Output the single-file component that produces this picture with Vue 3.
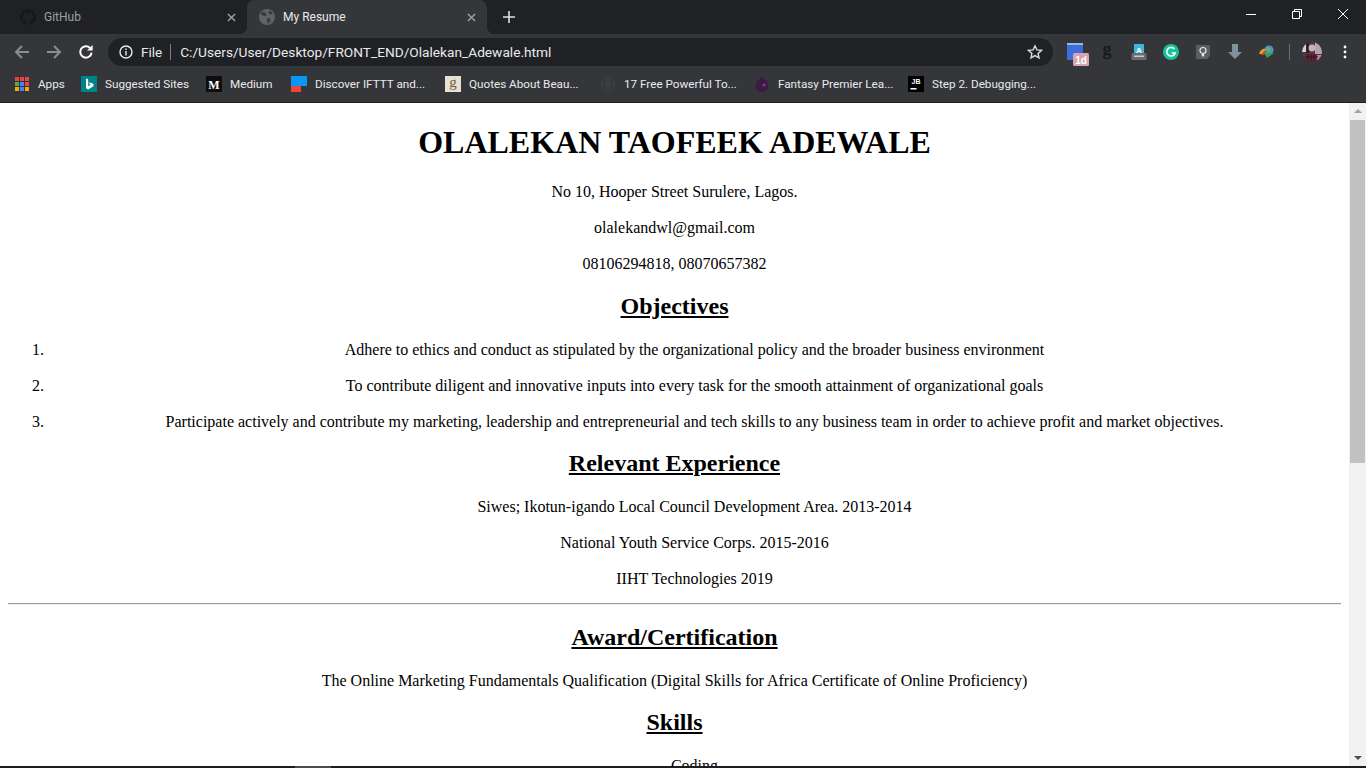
<script setup>
const bookmarks = [
  { id: 'bing', label: 'Suggested Sites', width: 109 },
  { id: 'medium', label: 'Medium', width: 69 },
  { id: 'ifttt', label: 'Discover IFTTT and...', width: 138 },
  { id: 'goodreads', label: 'Quotes About Beau...', width: 139 },
  { id: 'dark', label: '17 Free Powerful To...', width: 138 },
  { id: 'fpl', label: 'Fantasy Premier Lea...', width: 138 },
  { id: 'jb', label: 'Step 2. Debugging...', width: 138 },
]

const appColors = ['#e8453c', '#e8453c', '#e8453c', '#4caf50', '#4285f4', '#e8453c', '#f9ab00', '#4285f4', '#f9ab00']

const objectives = [
  'Adhere to ethics and conduct as stipulated by the organizational policy and the broader business environment',
  'To contribute diligent and innovative inputs into every task for the smooth attainment of organizational goals',
  'Participate actively and contribute my marketing, leadership and entrepreneurial and tech skills to any business team in order to achieve profit and market objectives.',
]

const experience = [
  'Siwes; Ikotun-igando Local Council Development Area. 2013-2014',
  'National Youth Service Corps. 2015-2016',
  'IIHT Technologies 2019',
]
</script>

<template>
  <div class="window">
    <header class="chrome">
      <div class="tabstrip">
        <div class="tab">
          <svg class="favicon" viewBox="0 0 16 16">
            <path fill="#17181a" d="M8 0C3.58 0 0 3.58 0 8c0 3.54 2.29 6.53 5.47 7.59.4.07.55-.17.55-.38v-1.49c-2.01.37-2.53-.49-2.69-.94-.09-.23-.48-.94-.82-1.13-.28-.15-.68-.52-.01-.53.63-.01 1.08.58 1.23.82.72 1.21 1.87.87 2.33.66.07-.52.28-.87.51-1.07-1.78-.2-3.64-.89-3.64-3.95 0-.87.31-1.59.82-2.15-.08-.2-.36-1.02.08-2.12 0 0 .67-.21 2.2.82a7.4 7.4 0 0 1 4 0c1.53-1.04 2.2-.82 2.2-.82.44 1.1.16 1.92.08 2.12.51.56.82 1.27.82 2.15 0 3.07-1.87 3.75-3.65 3.95.29.25.54.73.54 1.48v2.2c0 .21.15.46.55.38A8 8 0 0 0 16 8c0-4.42-3.58-8-8-8z" />
          </svg>
          <span class="tab-title">GitHub</span>
          <svg class="tab-close" viewBox="0 0 10 10"><path d="M1 1l8 8M9 1L1 9" /></svg>
        </div>
        <div class="tab active">
          <svg class="favicon" viewBox="0 0 16 16">
            <circle cx="8" cy="8" r="8" fill="#5f6368" />
            <path fill="#35383c" d="M3 2.500l3 1.200 1.800 2-1.300 1.500-2.200-.4-2.500-1.800zM8.200 9l3 .6.4 2-2 3-1-.7-.6-2.600zM10 1.600l2.600 1.400 1.200 2-2.600.6-1.600-1.600z" />
          </svg>
          <span class="tab-title">My Resume</span>
          <svg class="tab-close" viewBox="0 0 10 10"><path d="M1 1l8 8M9 1L1 9" /></svg>
        </div>
        <svg class="new-tab" viewBox="0 0 12 12"><path d="M6 0v12M0 6h12" /></svg>
        <div class="window-controls">
          <svg viewBox="0 0 10 10"><path d="M0 5.500h10" /></svg>
          <svg viewBox="0 0 10 10"><path d="M.5 2.500h7v7h-7zM2.500 2.500v-2h7v7h-2" /></svg>
          <svg viewBox="0 0 10 10"><path d="M0 0l10 10M10 0L0 10" /></svg>
        </div>
      </div>

      <div class="toolbar">
        <div class="nav">
          <svg viewBox="0 0 16 16" class="nav-off"><path d="M15 8H2M8 2L2 8l6 6" /></svg>
          <svg viewBox="0 0 16 16" class="nav-off"><path d="M1 8h13M8 2l6 6-6 6" /></svg>
          <svg viewBox="0 0 16 16" class="nav-on">
            <path d="M13.600 8.600A5.700 5.700 0 1 1 12 3.900" />
            <path class="solid" d="M14.600 1v5.600H9z" />
          </svg>
        </div>
        <div class="omnibox">
          <svg class="info" viewBox="0 0 14 14">
            <circle cx="7" cy="7" r="6" />
            <path d="M7 6v4.400M7 3.400v1.500" />
          </svg>
          <span class="scheme">File</span>
          <span class="omni-sep"></span>
          <span class="url">C:/Users/User/Desktop/FRONT_END/Olalekan_Adewale.html</span>
          <svg class="star" viewBox="0 0 16 16">
            <path d="M8 1.800l1.900 4.100 4.500.5-3.300 3 .9 4.500L8 11.600l-4 2.300.9-4.500-3.300-3 4.500-.5z" />
          </svg>
        </div>
        <div class="extensions">
          <svg class="ext ext-wide" viewBox="0 0 24 24">
            <rect x="0" y="0" width="16" height="17" rx="1" fill="#3d6ddb" />
            <rect x="0" y="0" width="16" height="2" fill="#9fb4e6" />
            <rect x="6" y="10" width="16" height="13" rx="1.500" fill="#d6a5af" />
            <text x="14" y="20.500" class="badge-text">1d</text>
          </svg>
          <svg class="ext" viewBox="0 0 16 16">
            <text x="8" y="11" class="g-text">g</text>
          </svg>
          <svg class="ext" viewBox="0 0 16 16">
            <rect x="3" y="0" width="10" height="10" rx="1" fill="#3fb6dc" />
            <text x="8" y="8.500" class="a-text">A</text>
            <rect x="0.500" y="9" width="15" height="7" rx="1" fill="#686b6f" />
            <rect x="3" y="11.500" width="10" height="1.500" fill="#c9cbcd" />
          </svg>
          <svg class="ext" viewBox="0 0 16 16">
            <circle cx="8" cy="8" r="8" fill="#15c39a" />
            <path d="M11.400 4.900A4.300 4.300 0 1 0 12.200 9H8.800" fill="none" stroke="#fff" stroke-width="1.600" />
          </svg>
          <svg class="ext" viewBox="0 0 16 16">
            <path d="M1 1h14v11l-3 3H1z" fill="#5c5e60" />
            <circle cx="8" cy="6.500" r="3" fill="none" stroke="#e8e8e8" stroke-width="1.200" />
            <path d="M6.800 10h2.400v2.400H6.800z" fill="#e8e8e8" />
          </svg>
          <svg class="ext" viewBox="0 0 16 16">
            <path d="M5 0h6v8h4l-7 7-7-7h4z" fill="#7f929b" />
          </svg>
          <svg class="ext" viewBox="0 0 16 16">
            <circle cx="10" cy="6" r="4.600" fill="#4d8fd6" />
            <path d="M8 2.500l4 2-2 3-3-1z" fill="#6fb544" />
            <path d="M0 10c1-4 4-6 7-5L3.500 10z" fill="#e0a030" />
            <path d="M2 11c1-2 3-4 5-4L5 11z" fill="#d8413a" />
            <path d="M5 9h10l-7 5z" fill="#3aa33c" />
          </svg>
          <span class="ext-sep"></span>
          <svg class="avatar" viewBox="0 0 20 20">
            <defs>
              <clipPath id="avatar-clip"><circle cx="10" cy="10" r="10" /></clipPath>
            </defs>
            <g clip-path="url(#avatar-clip)">
              <rect width="20" height="20" fill="#4a3a42" />
              <rect x="13" width="7" height="12" fill="#b5a3ad" />
              <rect y="2" width="4" height="8" fill="#d8d4d6" />
              <rect x="4" width="3" height="11" fill="#2b2226" />
              <circle cx="10" cy="6" r="3.400" fill="#cfaeb8" />
              <rect x="3" y="12" width="13" height="8" fill="#6e2438" />
              <rect x="15" y="13" width="5" height="7" fill="#c97ba0" />
              <path d="M6 12v8M9 12v8M12 12v8M3 15h13" stroke="#2a1a20" stroke-width="1" />
            </g>
          </svg>
          <svg class="menu" viewBox="0 0 4 14">
            <circle cx="2" cy="2" r="1.400" /><circle cx="2" cy="7" r="1.400" /><circle cx="2" cy="12" r="1.400" />
          </svg>
        </div>
      </div>

      <div class="bookmarks">
        <div class="bookmark apps">
          <div class="apps-grid">
            <i v-for="(c, n) in appColors" :key="n" :style="{ background: c }"></i>
          </div>
          <span>Apps</span>
        </div>
        <div v-for="b in bookmarks" :key="b.id" class="bookmark" :style="{ width: b.width + 'px' }">
          <svg v-if="b.id === 'bing'" class="favicon" viewBox="0 0 16 16">
            <rect width="16" height="16" fill="#00828a" />
            <path fill="#fff" d="M5 2.500l2.200.8v7l2.600-1.500-1.200-.6-.8-2 4.600 1.600v2.400L7.200 13.500 5 12.300z" />
          </svg>
          <svg v-else-if="b.id === 'medium'" class="favicon" viewBox="0 0 16 16">
            <rect width="16" height="16" fill="#0e0e0e" />
            <text x="8" y="12.500" class="m-text">M</text>
          </svg>
          <svg v-else-if="b.id === 'ifttt'" class="favicon" viewBox="0 0 16 16">
            <rect width="16" height="10" fill="#0a96f5" />
            <rect y="10" width="10" height="6" fill="#ee4433" />
            <rect x="10" y="10" width="6" height="6" fill="#33363a" />
          </svg>
          <svg v-else-if="b.id === 'goodreads'" class="favicon" viewBox="0 0 16 16">
            <rect width="16" height="16" fill="#e9e1cf" />
            <text x="8" y="11" class="gr-text">g</text>
          </svg>
          <svg v-else-if="b.id === 'dark'" class="favicon" viewBox="0 0 16 16">
            <circle cx="8" cy="8" r="7.500" fill="#3a3d41" />
            <circle cx="8" cy="8" r="4.500" fill="none" stroke="#33363a" stroke-width="1.500" />
          </svg>
          <svg v-else-if="b.id === 'fpl'" class="favicon" viewBox="0 0 16 16">
            <path fill="#3d1a46" d="M7 0l2 1.500 1.500 2L13 5l1.500 4.500-1 4L10 16H5l-3-2.500L1.500 9l1.500-4 2.500-2z" />
            <circle cx="10" cy="9" r="1.500" fill="#6a4d72" />
          </svg>
          <svg v-else class="favicon" viewBox="0 0 16 16">
            <rect width="16" height="16" fill="#000" />
            <text x="8" y="8" class="jb-text">JB</text>
            <rect x="2.500" y="12" width="6" height="1.500" fill="#fff" />
          </svg>
          <span>{{ b.label }}</span>
        </div>
      </div>
    </header>

    <div class="viewport">
      <main class="page">
        <h1>OLALEKAN TAOFEEK ADEWALE</h1>
        <p>No 10, Hooper Street Surulere, Lagos.</p>
        <p>olalekandwl@gmail.com</p>
        <p>08106294818, 08070657382</p>

        <h2>Objectives</h2>
        <ol>
          <li v-for="item in objectives" :key="item">{{ item }}</li>
        </ol>

        <h2>Relevant Experience</h2>
        <ul>
          <li v-for="item in experience" :key="item">{{ item }}</li>
        </ul>

        <hr />

        <h2>Award/Certification</h2>
        <p>The Online Marketing Fundamentals Qualification (Digital Skills for Africa Certificate of Online Proficiency)</p>

        <h2>Skills</h2>
        <ul>
          <li>Coding</li>
        </ul>
      </main>
      <aside class="scrollbar">
        <span class="arrow up"></span>
        <div class="thumb"></div>
        <span class="arrow down"></span>
      </aside>
    </div>

    <footer class="taskbar"><span class="task-item"></span></footer>
  </div>
</template>

<style>
html,
body {
  margin: 0;
  height: 100%;
  overflow: hidden;
}
</style>

<style scoped>
.window {
  width: 1366px;
  height: 768px;
  display: flex;
  flex-direction: column;
  overflow: hidden;
  background: #fff;
}
.chrome {
  flex: none;
  height: 103px;
  background: #35363a;
  border-bottom: 1px solid #1d1e20;
  box-sizing: border-box;
  font-family: Roboto, "Liberation Sans", sans-serif;
  font-size: 12px;
  color: #e8eaed;
}
.favicon {
  width: 16px;
  height: 16px;
  flex: none;
}

/* tabs */
.tabstrip {
  height: 34px;
  background: #202124;
  display: flex;
  align-items: flex-end;
}
.tab {
  width: 247px;
  height: 34px;
  box-sizing: border-box;
  display: flex;
  align-items: center;
  padding: 0 11px 0 20px;
  color: #9aa0a6;
}
.tab.active {
  width: 240px;
  background: #35363a;
  border-radius: 8px 8px 0 0;
  color: #e8eaed;
  padding: 0 11px 0 12px;
  position: relative;
}
.tab.active::before,
.tab.active::after {
  content: "";
  position: absolute;
  bottom: 0;
  width: 8px;
  height: 8px;
}
.tab.active::before {
  left: -8px;
  background: radial-gradient(circle at 0 0, #202124 8px, #35363a 8.5px);
}
.tab.active::after {
  right: -8px;
  background: radial-gradient(circle at 100% 0, #202124 8px, #35363a 8.5px);
}
.tab-title {
  flex: 1;
  margin-left: 8px;
  font-size: 12px;
}
.tab-close {
  width: 9px;
  height: 9px;
  fill: none;
  stroke: #9aa0a6;
  stroke-width: 1.6;
}
.new-tab {
  width: 12px;
  height: 12px;
  margin: 0 0 11px 16px;
  fill: none;
  stroke: #dee1e6;
  stroke-width: 1.6;
}
.window-controls {
  margin-left: auto;
  align-self: flex-start;
  display: flex;
  gap: 36px;
  padding: 9px 18px 0 0;
}
.window-controls svg {
  width: 10px;
  height: 10px;
  fill: none;
  stroke: #fff;
  stroke-width: 1;
  overflow: visible;
}

/* toolbar */
.toolbar {
  height: 36px;
  display: flex;
  align-items: center;
  padding-left: 14px;
}
.nav {
  display: flex;
  gap: 16px;
  align-items: center;
  width: 94px;
  flex: none;
}
.nav svg {
  width: 16px;
  height: 16px;
  fill: none;
  stroke-width: 2;
}
.nav-off {
  stroke: #8a8d91;
}
.nav-on {
  stroke: #fff;
}
.nav-on .solid {
  fill: #fff;
  stroke: none;
}
.omnibox {
  width: 945px;
  height: 28px;
  box-sizing: border-box;
  background: #202124;
  border-radius: 14px;
  display: flex;
  align-items: center;
  padding: 0 10px 0 11px;
  font-size: 14px;
}
.info {
  width: 14px;
  height: 14px;
  flex: none;
  fill: none;
  stroke: #e8eaed;
  stroke-width: 1.4;
}
.scheme {
  margin-left: 8px;
  font-size: 13.5px;
}
.omni-sep {
  width: 1px;
  height: 16px;
  background: #7d8084;
  margin: 0 9px 0 8px;
}
.url {
  flex: 1;
  font-size: 13.7px;
  color: #e8eaed;
}
.star {
  width: 16px;
  height: 16px;
  fill: none;
  stroke: #dadce0;
  stroke-width: 1.4;
}
.extensions {
  display: flex;
  align-items: center;
  margin-left: 14px;
  gap: 16px;
}
.ext {
  width: 16px;
  height: 16px;
  flex: none;
  overflow: visible;
}
.ext-wide {
  width: 24px;
  height: 24px;
  margin-right: -8px;
  margin-top: 6px;
}
.badge-text {
  font: bold 10px "Liberation Sans", sans-serif;
  fill: #fff;
  text-anchor: middle;
}
.g-text {
  font: bold 18px "Liberation Serif", serif;
  fill: #17181a;
  text-anchor: middle;
}
.a-text {
  font: bold 8px "Liberation Sans", sans-serif;
  fill: #fff;
  text-anchor: middle;
}
.ext-sep {
  width: 1px;
  height: 16px;
  background: #6a6d70;
  margin: 0 0 0 -2px;
}
.avatar {
  width: 20px;
  height: 20px;
  margin-left: -4px;
}
.menu {
  width: 4px;
  height: 14px;
  fill: #fff;
  margin-left: 5px;
}

/* bookmarks */
.bookmarks {
  height: 32px;
  display: flex;
  align-items: center;
  padding: 0 0 4px 15px;
  gap: 16px;
  box-sizing: border-box;
}
.bookmark {
  flex: none;
  display: flex;
  align-items: center;
  gap: 8px;
  color: #e8eaed;
  font-size: 11.7px;
  white-space: nowrap;
}
.bookmark.apps {
  width: 50px;
  gap: 9px;
}
.apps-grid {
  width: 14px;
  height: 14px;
  display: grid;
  grid-template-columns: repeat(3, 4px);
  grid-template-rows: repeat(3, 4px);
  gap: 1px;
}
.m-text {
  font: bold 12px "Liberation Serif", serif;
  fill: #fff;
  text-anchor: middle;
}
.gr-text {
  font: 15px "Liberation Serif", serif;
  fill: #6b5a3e;
  text-anchor: middle;
}
.jb-text {
  font: bold 7px "Liberation Sans", sans-serif;
  fill: #fff;
  text-anchor: middle;
}

/* page */
.viewport {
  flex: 1;
  min-height: 0;
  display: flex;
}
.page {
  flex: 1;
  min-width: 0;
  overflow: hidden;
  padding: 0 8px;
  text-align: center;
  font-family: "Liberation Serif", "Times New Roman", serif;
  font-size: 16px;
  color: #000;
}
h1 {
  font-size: 32px;
  margin: 21px 0;
}
h2 {
  font-size: 24px;
  line-height: 27px;
  margin: 18.5px 0 20px;
  text-decoration: underline;
}
p {
  line-height: 20px;
  margin: 16px 0;
}
ol,
ul {
  margin: 16px 0;
  padding-left: 40px;
}
li {
  line-height: 20px;
  margin: 16px 0;
}
ul {
  list-style: none;
}
hr {
  margin: -2px 0 0;
  border: 0;
  border-top: 1px solid #9a9a9a;
  border-bottom: 1px solid #eeeeee;
}

/* scrollbar */
.scrollbar {
  flex: none;
  width: 17px;
  background: #f1f1f1;
  display: flex;
  flex-direction: column;
  align-items: center;
}
.thumb {
  width: 15px;
  height: 343px;
  background: #c1c1c1;
}
.arrow {
  flex: none;
  width: 0;
  height: 0;
  border-left: 4px solid transparent;
  border-right: 4px solid transparent;
}
.arrow.up {
  border-bottom: 4px solid #a3a3a3;
  margin: 6px 0 7px;
}
.arrow.down {
  border-top: 4px solid #505050;
  margin: auto 0 6px;
}

.taskbar {
  flex: none;
  height: 2px;
  background: #1d1d1f;
  padding-left: 295px;
}
.task-item {
  display: block;
  width: 36px;
  height: 2px;
  background: #4d4d4d;
}
</style>
